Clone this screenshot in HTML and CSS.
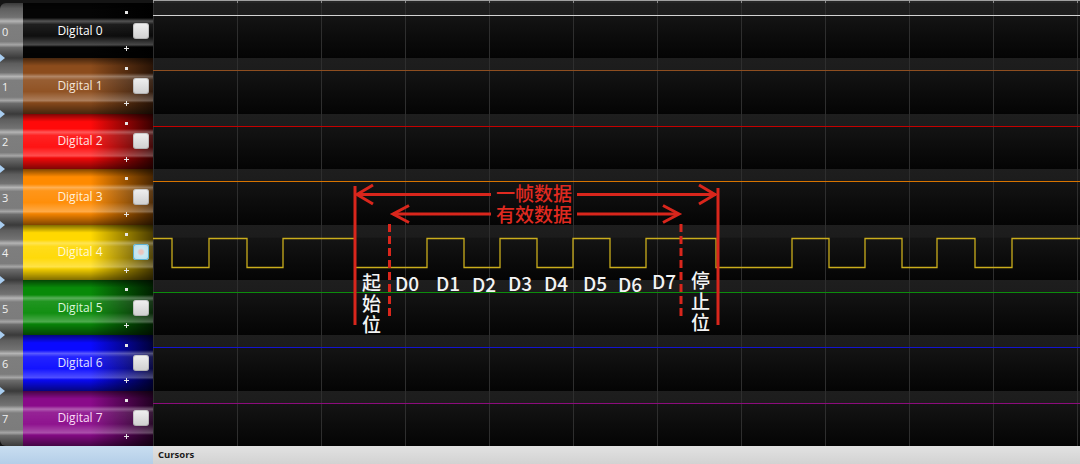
FILE: index.html
```html
<!DOCTYPE html>
<html>
<head>
<meta charset="utf-8">
<title>Logic analyzer</title>
<link rel="stylesheet" href="styles.css">
</head>
<body>
<div class="app">
  <div class="main">
    <div class="channels">
      <div class="ch c0"><div class="num">0</div><div class="band"><i class="dot"></i><span class="label">Digital 0</span><i class="check"></i><i class="plus"></i></div></div>
      <div class="ch c1"><div class="num">1</div><div class="band"><i class="dot"></i><span class="label">Digital 1</span><i class="check"></i><i class="plus"></i></div></div>
      <div class="ch c2"><div class="num">2</div><div class="band"><i class="dot"></i><span class="label">Digital 2</span><i class="check"></i><i class="plus"></i></div></div>
      <div class="ch c3"><div class="num">3</div><div class="band"><i class="dot"></i><span class="label">Digital 3</span><i class="check"></i><i class="plus"></i></div></div>
      <div class="ch c4"><div class="num">4</div><div class="band"><i class="dot"></i><span class="label">Digital 4</span><i class="check hover"></i><i class="plus"></i></div></div>
      <div class="ch c5"><div class="num">5</div><div class="band"><i class="dot"></i><span class="label">Digital 5</span><i class="check"></i><i class="plus"></i></div></div>
      <div class="ch c6"><div class="num">6</div><div class="band"><i class="dot"></i><span class="label">Digital 6</span><i class="check"></i><i class="plus"></i></div></div>
      <div class="ch c7"><div class="num">7</div><div class="band"><i class="dot"></i><span class="label">Digital 7</span><i class="check"></i><i class="plus"></i></div></div>
    </div>
    <div class="wave">
      <div class="ruler"></div>
      <div class="wrows">
        <div class="wrow"><i class="trace t0"></i></div>
        <div class="wrow"><i class="trace t1"></i></div>
        <div class="wrow"><i class="trace t2"></i></div>
        <div class="wrow"><i class="trace t3"></i></div>
        <div class="wrow"></div>
        <div class="wrow"><i class="trace t5"></i></div>
        <div class="wrow"><i class="trace t6"></i></div>
        <div class="wrow"><i class="trace t7"></i></div>
      </div>
    </div>
  </div>
  <div class="footer">
    <div class="footer-left"></div>
    <div class="cursors">Cursors</div>
  </div>

  <svg class="overlay" viewBox="0 0 1080 464" width="1080" height="464">
    <polyline class="sig" points="153,238.5 172,238.5 172,267.5 209,267.5 209,238.5 247,238.5 247,267.5 283,267.5 283,238.5 355,238.5 355,267.5 427,267.5 427,238.5 464,238.5 464,267.5 500,267.5 500,238.5 537,238.5 537,267.5 573,267.5 573,238.5 610,238.5 610,267.5 646,267.5 646,238.5 716,238.5 716,267.5 792,267.5 792,238.5 829,238.5 829,267.5 865,267.5 865,238.5 902,238.5 902,267.5 937,267.5 937,238.5 975,238.5 975,267.5 1012,267.5 1012,238.5 1080,238.5"/>

    <line class="red" x1="355" y1="186" x2="355" y2="325"/>
    <line class="red" x1="718" y1="188" x2="718" y2="325"/>
    <line class="red dash" x1="389.5" y1="224" x2="389.5" y2="316"/>
    <line class="red dash" x1="681" y1="224" x2="681" y2="316"/>

    <path class="red" d="M357 194.5 H491 M577 194.5 H716"/>
    <path class="red" d="M373 185 L357 194.5 L373 204"/>
    <path class="red" d="M699 185 L715 194.5 L699 204"/>
    <text class="rtext" x="534" y="201" text-anchor="middle">一帧数据</text>

    <path class="red" d="M393 214 H491 M577 214 H678"/>
    <path class="red" d="M409 205.5 L393 214 L409 222.5"/>
    <path class="red" d="M663 205.5 L679 214 L663 222.5"/>
    <text class="rtext" x="534" y="222" text-anchor="middle">有效数据</text>

    <text class="wtext vtext" x="371.5" y="273">起始位</text>
    <text class="wtext vtext" x="700.5" y="271">停止位</text>

    <text class="dtext" x="395" y="291">D0</text>
    <text class="dtext" x="436" y="291">D1</text>
    <text class="dtext" x="472" y="292">D2</text>
    <text class="dtext" x="508" y="291">D3</text>
    <text class="dtext" x="544" y="291">D4</text>
    <text class="dtext" x="583" y="291">D5</text>
    <text class="dtext" x="618" y="292">D6</text>
    <text class="dtext" x="652" y="289">D7</text>
  </svg>
</div>
</body>
</html>
```

FILE: styles.css
```css
* { box-sizing: border-box; margin: 0; padding: 0; }

html, body {
  width: 1080px;
  height: 464px;
  overflow: hidden;
  background: #000;
}

body { font-family: "Open Sans", "Noto Sans", sans-serif; }

.app {
  position: relative;
  width: 1080px;
  height: 464px;
  display: flex;
  flex-direction: column;
}

.main {
  display: flex;
  height: 446px;
}

/* ---------- channel list ---------- */
.channels {
  width: 153px;
  padding-top: 3px;
  background: #151515;
  display: grid;
  grid-template-rows: repeat(8, 1fr);
}

.ch {
  display: grid;
  grid-template-columns: 23px 1fr;
}

.c0 { --c: #050505; --d: #000; --l: #ffffff; }
.c1 { --c: #8c4c1c; --d: #2a1406; --l: #f4e6da; }
.c2 { --c: #ff0a0a; --d: #3a0000; --l: #ffe2e2; }
.c3 { --c: #ff8a00; --d: #4a2600; --l: #fff0dc; }
.c4 { --c: #ffd800; --d: #4a3c00; --l: #fff8d6; }
.c5 { --c: #088a08; --d: #002000; --l: #dcf6dc; }
.c6 { --c: #0a0aff; --d: #00003a; --l: #e2e2ff; }
.c7 { --c: #8a0a8a; --d: #220022; --l: #fadcf6; }

.num {
  position: relative;
  display: flex;
  align-items: center;
  padding-left: 2px;
  padding-top: 1px;
  color: #f0f0f0;
  font-size: 11px;
  background: linear-gradient(to bottom,
    #3a3a3a 0%, #5e5e5e 10%, #727272 26%, #b4b4b4 33%, #7e7e7e 40%,
    #7c7c7c 70%, #a6a6a6 76%, #6c6c6c 81%, #4a4a4a 94%, #3a3a3a 100%);
}

.c0 .num { border-top-left-radius: 6px; }
.c7 .num { border-bottom-left-radius: 6px; }

.ch + .ch .num::before {
  content: "";
  position: absolute;
  left: 0;
  top: -4px;
  border-left: 5px solid #a8cdf0;
  border-top: 4px solid transparent;
  border-bottom: 4px solid transparent;
}

.band {
  display: grid;
  grid-template-columns: 1fr 10px 16px;
  grid-template-rows: 1fr 16px 1fr;
  column-gap: 2px;
  padding-right: 4px;
  background:
    linear-gradient(to bottom,
      rgba(0,0,0,.5) 0%, rgba(0,0,0,0) 14%,
      rgba(255,255,255,0) 27%, rgba(255,255,255,.32) 33%, rgba(255,255,255,.1) 39%,
      rgba(255,255,255,.04) 60%, rgba(255,255,255,.28) 76%, rgba(0,0,0,.05) 80%,
      rgba(0,0,0,.5) 100%),
    linear-gradient(to right, var(--c) 0%, var(--c) 52%, var(--d) 100%);
}

.dot {
  grid-column: 2;
  grid-row: 1;
  place-self: center;
  width: 3px;
  height: 3px;
  background: #e6e6e6;
}

.label {
  grid-column: 1 / 3;
  grid-row: 2;
  justify-self: center;
  align-self: center;
  padding-left: 6px;
  font-size: 12px;
  line-height: 16px;
  white-space: nowrap;
  color: var(--l);
}

.check {
  grid-column: 3;
  grid-row: 2;
  border-radius: 3px;
  background: linear-gradient(#f0f0f0, #cfcfcf);
  box-shadow: inset 0 0 0 1px rgba(0,0,0,.15);
}

.check.hover {
  background: radial-gradient(circle, #e9c6c0 0 2px, #c8e8f2 4px, #b6dcea 100%);
  box-shadow: inset 0 0 0 1px #5eb2d2;
}

.plus {
  grid-column: 2;
  grid-row: 3;
  place-self: center;
  width: 5px;
  height: 5px;
  background:
    linear-gradient(#e6e6e6, #e6e6e6) center / 5px 1px no-repeat,
    linear-gradient(#e6e6e6, #e6e6e6) center / 1px 5px no-repeat;
}

/* ---------- waveform area ---------- */
.wave {
  flex: 1;
  display: flex;
  flex-direction: column;
  background: #0a0a0a;
}

.ruler {
  height: 3px;
  border-top: 1px solid #a0a0a0;
  background:
    linear-gradient(to right, #8a8a8a 0 1px, transparent 1px) 0 0 / 84px 100% repeat-x,
    #262626;
}

.wrows {
  flex: 1;
  display: grid;
  grid-template-rows: repeat(8, 1fr);
}

.wrow {
  background:
    linear-gradient(to right, #2e2e2e 0 1px, transparent 1px) 0 0 / 84px 100% repeat-x,
    linear-gradient(to bottom, #1e1e1e 0%, #1c1c1c 22%, #141414 24%, #0c0c0c 60%, #040404 100%);
}

.trace {
  display: block;
  margin-top: 12px;
  height: 1px;
}

.t0 { background: #d2d2d2; }
.t1 { background: #8e4e20; }
.t2 { background: #c40000; }
.t3 { background: #d87400; }
.t5 { background: #0c8c0c; }
.t6 { background: #1414d0; }
.t7 { background: #8c0c7c; }

/* ---------- footer ---------- */
.footer {
  display: flex;
  height: 18px;
}

.footer-left {
  width: 153px;
  background: linear-gradient(#c9def1, #b4cee8);
}

.cursors {
  flex: 1;
  background: linear-gradient(#e2e2e2, #d2d2d2);
  color: #1a1a1a;
  font-size: 9.5px;
  font-weight: 700;
  line-height: 18px;
  padding-left: 5px;
}

/* ---------- annotation overlay ---------- */
.overlay {
  position: absolute;
  left: 0;
  top: 0;
  width: 1080px;
  height: 464px;
  pointer-events: none;
}

.sig {
  fill: none;
  stroke: #c9ad1c;
  stroke-width: 1.3;
}

.red {
  fill: none;
  stroke: #d9261c;
  stroke-width: 3;
}

.dash { stroke-dasharray: 8 4; }

.rtext {
  fill: #e02a20;
  font-family: "Noto Sans CJK SC", sans-serif;
  font-size: 19px;
  font-weight: 500;
}

.wtext {
  fill: #f4f4f4;
  font-family: "Noto Sans CJK SC", sans-serif;
  font-size: 19px;
  font-weight: 500;
}

.vtext {
  writing-mode: vertical-rl;
  letter-spacing: 2px;
}

.dtext {
  fill: #f4f4f4;
  font-family: "Noto Sans CJK SC", sans-serif;
  font-size: 19px;
  font-weight: 500;
}
```
